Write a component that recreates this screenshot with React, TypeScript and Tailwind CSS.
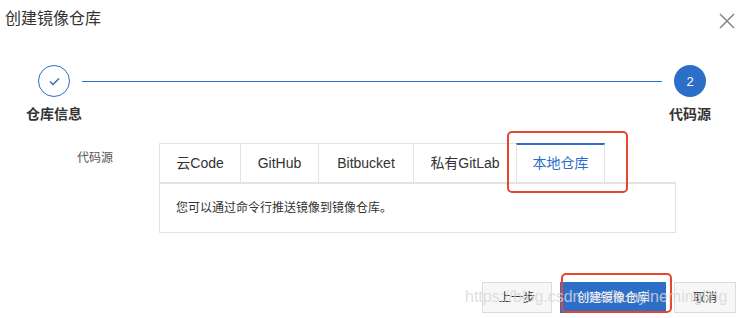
import React from "react";

const tabs = [
  { label: "云Code", w: "w-[81px]" },
  { label: "GitHub", w: "w-[78px]" },
  { label: "Bitbucket", w: "w-[95px]" },
  { label: "私有GitLab", w: "w-[103px]" },
];

export default function App() {
  return (
    <div
      className="relative w-[745px] h-[318px] bg-white overflow-hidden text-[#333]"
      style={{ fontFamily: '"Liberation Sans", "Noto Sans CJK SC", sans-serif' }}
    >
      {/* header */}
      <div className="flex items-start justify-between pt-[9px] pl-[5px] pr-[10px]">
        <div className="text-[16px] leading-[20px] text-[#333]">创建镜像仓库</div>
        <svg width="16" height="16" viewBox="0 0 16 16" className="mt-[4px]">
          <path d="M1 1 L15 15 M15 1 L1 15" stroke="#8a8a8a" strokeWidth="1.6" fill="none" />
        </svg>
      </div>

      {/* steps */}
      <div className="flex items-start mt-[36px] pl-[22px] pr-[23px]">
        <div className="flex flex-col items-center w-[64px]">
          <div className="w-[32px] h-[32px] rounded-full border border-[#2d6ec8] bg-white flex items-center justify-center">
            <svg width="11" height="9" viewBox="0 0 11 9">
              <path d="M1 4.5 L4 7.5 L10 1.5" stroke="#2d6ec8" strokeWidth="1.5" fill="none" />
            </svg>
          </div>
          <div className="mt-[7px] text-[14px] leading-[20px] font-bold text-[#333] whitespace-nowrap">仓库信息</div>
        </div>
        <div className="flex-1 h-[1px] bg-[#2d6ec8] mt-[16px] mx-[-4px]" />
        <div className="flex flex-col items-center w-[64px]">
          <div className="w-[32px] h-[32px] rounded-full bg-[#2d6ec8] flex items-center justify-center text-white text-[13px] leading-none">
            2
          </div>
          <div className="mt-[7px] text-[14px] leading-[20px] font-bold text-[#333] whitespace-nowrap">代码源</div>
        </div>
      </div>

      {/* form */}
      <div className="flex mt-[19px] pl-[77px]">
        <div className="w-[82px] pt-[6px] text-[12px] leading-[18px] text-[#555]">代码源</div>
        <div className="w-[517px] flex flex-col">
          <div className="flex h-[39px]">
            {tabs.map((t) => (
              <div
                key={t.label}
                className={`${t.w} h-[39px] border-l border-t border-[#e3e3e3] bg-white flex items-center justify-center text-[14px] text-[#333] whitespace-nowrap`}
              >
                {t.label}
              </div>
            ))}
            <div className="w-[89px] h-[39px] border-x border-t-2 border-x-[#e3e3e3] border-t-[#2d6ec8] bg-white flex items-center justify-center text-[14px] text-[#2d6ec8] whitespace-nowrap">
              本地仓库
            </div>
          </div>
          <div className="h-[51px] border border-t-2 border-[#e3e3e3] flex items-center pl-[16px] text-[12px] text-[#333]">
            您可以通过命令行推送镜像到镜像仓库。
          </div>
        </div>
      </div>

      {/* buttons */}
      <div className="flex justify-end gap-[8px] mt-[49px] pr-[9px]">
        <div className="w-[70px] h-[31px] border border-[#dcdcdc] bg-[#f7f7f7] flex items-center justify-center text-[12px] text-[#333]">
          上一步
        </div>
        <div className="w-[106px] h-[31px] bg-[#2d6ec8] flex items-center justify-center text-[12px] text-white">
          创建镜像仓库
        </div>
        <div className="w-[62px] h-[31px] border border-[#dcdcdc] bg-[#f7f7f7] flex items-center justify-center text-[12px] text-[#333]">
          取消
        </div>
      </div>

      {/* annotation boxes */}
      <div className="absolute left-[507px] top-[131px] w-[121px] h-[62px] border-2 border-[#e8452f] rounded-[5px]" />
      <div className="absolute left-[561px] top-[273px] w-[111px] h-[40px] border-2 border-[#e8452f] rounded-[5px]" />

      {/* watermark */}
      <div className="absolute left-[465px] top-[287px] text-[16px] leading-[20px] text-[#d8d8d8] opacity-80 whitespace-nowrap pointer-events-none">
        https://blog.csdn.net/kunyinemingling
      </div>
    </div>
  );
}
